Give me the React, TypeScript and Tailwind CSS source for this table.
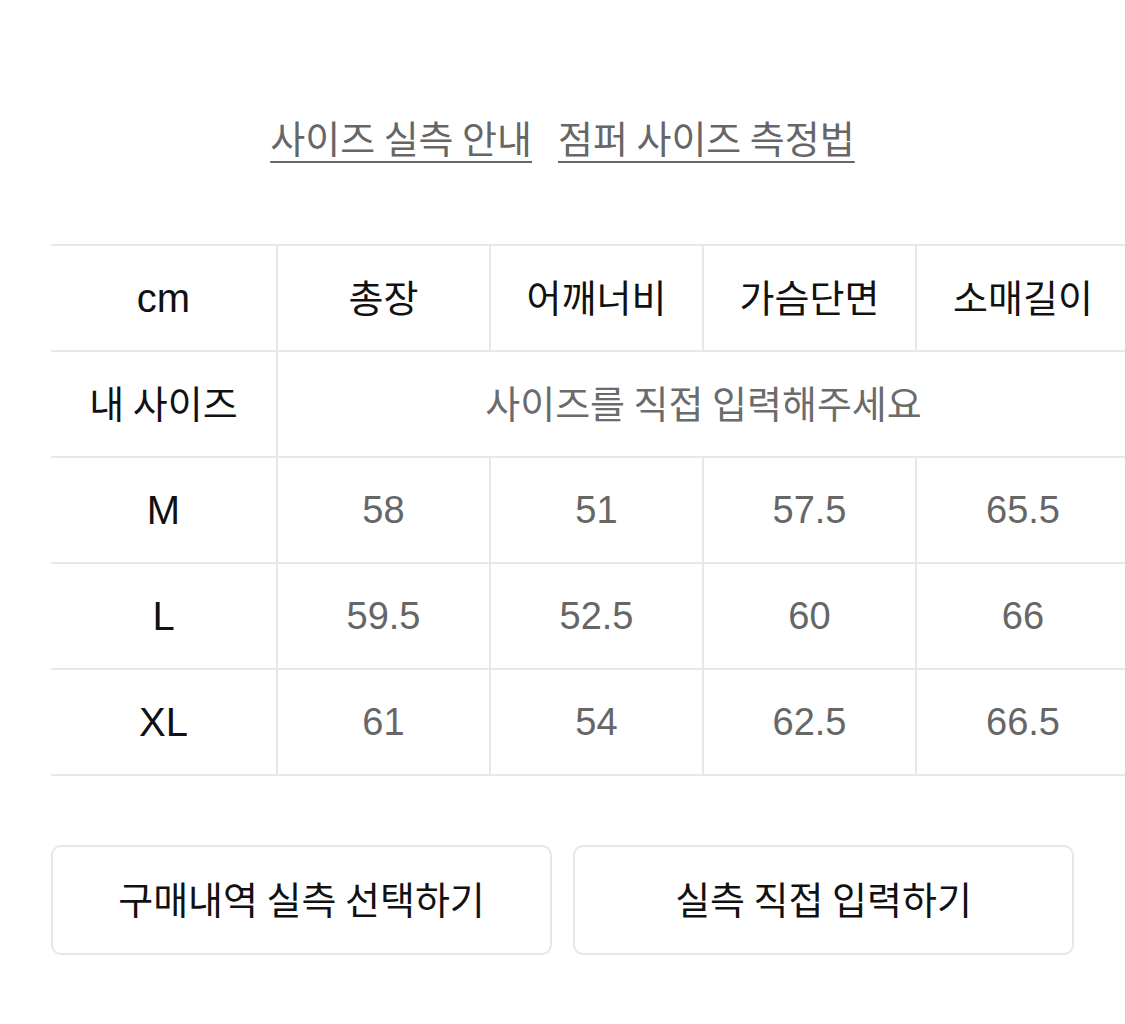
const KR = "font-['Noto_Sans_CJK_KR','Noto_Sans',sans-serif]";
const LATIN = "font-['Liberation_Sans','Noto_Sans_CJK_KR',sans-serif]";

const columns = ["총장", "어깨너비", "가슴단면", "소매길이"];

const sizes = [
  { label: "M", values: ["58", "51", "57.5", "65.5"] },
  { label: "L", values: ["59.5", "52.5", "60", "66"] },
  { label: "XL", values: ["61", "54", "62.5", "66.5"] },
];

function SizeTable() {
  return (
    <table className="w-[1078px] table-fixed border-collapse border-t-2 border-[#e8e8e8]">
      <colgroup>
        <col className="w-[226px]" />
        <col className="w-[213px]" />
        <col className="w-[213px]" />
        <col className="w-[213px]" />
        <col className="w-[213px]" />
      </colgroup>
      <tbody>
        <tr className="h-[106px] border-b-2 border-[#e8e8e8]">
          <td className={`${LATIN} text-center text-[40px] leading-none text-[#111]`}>cm</td>
          {columns.map((col) => (
            <td
              key={col}
              className={`${KR} border-l-2 border-[#e8e8e8] pb-[4px] text-center text-[38px] leading-none text-[#111]`}
            >
              {col}
            </td>
          ))}
        </tr>
        <tr className="h-[106px] border-b-2 border-[#e8e8e8]">
          <td className={`${KR} pb-[4px] text-center text-[38px] leading-none text-[#111]`}>내 사이즈</td>
          <td
            colSpan={4}
            className={`${KR} border-l-2 border-[#e8e8e8] pb-[4px] text-center text-[38px] leading-none text-[#6b6b6b]`}
          >
            사이즈를 직접 입력해주세요
          </td>
        </tr>
        {sizes.map((row) => (
          <tr key={row.label} className="h-[106px] border-b-2 border-[#e8e8e8]">
            <td className={`${LATIN} text-center text-[40px] leading-none text-[#111]`}>{row.label}</td>
            {row.values.map((value, i) => (
              <td
                key={i}
                className={`${LATIN} border-l-2 border-[#e8e8e8] text-center text-[38px] leading-none text-[#666]`}
              >
                {value}
              </td>
            ))}
          </tr>
        ))}
      </tbody>
    </table>
  );
}

export default function App() {
  return (
    <div className="h-[1024px] w-[1125px] overflow-hidden bg-white">
      <div className={`${KR} flex justify-center gap-[26px] pt-[118px] text-[38px] leading-[38px] text-[#666]`}>
        <span className="underline decoration-2 underline-offset-[8px]">사이즈 실측 안내</span>
        <span className="underline decoration-2 underline-offset-[8px]">점퍼 사이즈 측정법</span>
      </div>

      <div className="ml-[51px] mt-[88px]">
        <SizeTable />
      </div>

      <div className="mt-[69px] grid grid-cols-2 gap-[21px] px-[51px]">
        <button
          className={`${KR} h-[110px] rounded-[10px] border-2 border-[#e6e6e6] bg-white pb-[4px] text-[38px] leading-none text-[#111]`}
        >
          구매내역 실측 선택하기
        </button>
        <button
          className={`${KR} h-[110px] rounded-[10px] border-2 border-[#e6e6e6] bg-white pb-[4px] text-[38px] leading-none text-[#111]`}
        >
          실측 직접 입력하기
        </button>
      </div>
    </div>
  );
}
